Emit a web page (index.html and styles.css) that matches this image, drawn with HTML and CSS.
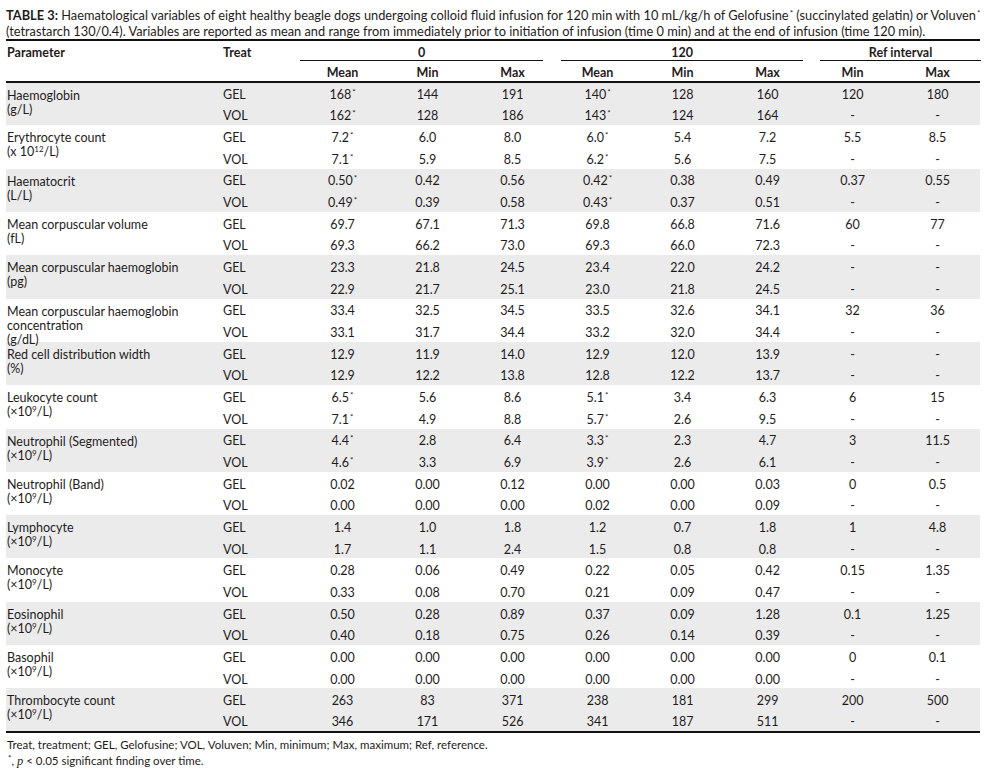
FILE: index.html
```html
<!DOCTYPE html>
<html lang="en">
<head>
<meta charset="utf-8">
<title>Table 3</title>
<link rel="stylesheet" href="styles.css">
</head>
<body>
<div class="page">
  <div class="caption">
    <div class="cap-line"><b>TABLE 3:</b> Haematological variables of eight healthy beagle dogs undergoing colloid fluid infusion for 120 min with 10 mL/kg/h of Gelofusine<sup class="s">*</sup> (succinylated gelatin) or Voluven<sup class="s">*</sup></div>
    <div class="cap-line">(tetrastarch 130/0.4). Variables are reported as mean and range from immediately prior to initiation of infusion (time 0 min) and at the end of infusion (time 120 min).</div>
  </div>
  <table class="data">
    <colgroup>
      <col class="c-param"><col class="c-treat">
      <col class="c-num"><col class="c-num"><col class="c-num">
      <col class="c-num"><col class="c-num"><col class="c-num">
      <col class="c-num"><col class="c-num">
    </colgroup>
    <thead>
      <tr class="h1">
        <th class="left">Parameter</th>
        <th class="left">Treat</th>
        <th colspan="3" class="grp"><div class="grp-in g0">0</div></th>
        <th colspan="3" class="grp"><div class="grp-in g120">120</div></th>
        <th colspan="2" class="grp"><div class="grp-in gref">Ref interval</div></th>
      </tr>
      <tr class="h2">
        <th></th><th></th>
        <th>Mean</th><th>Min</th><th>Max</th>
        <th>Mean</th><th>Min</th><th>Max</th>
        <th>Min</th><th>Max</th>
      </tr>
    </thead>
    <tbody class="shade">
      <tr><td rowspan="2" class="param"><div class="pbox">Haemoglobin<br>(g/L)</div></td><td class="treat">GEL</td><td>168<sup class="s">*</sup></td><td>144</td><td>191</td><td>140<sup class="s">*</sup></td><td>128</td><td>160</td><td>120</td><td>180</td></tr>
      <tr><td class="treat">VOL</td><td>162<sup class="s">*</sup></td><td>128</td><td>186</td><td>143<sup class="s">*</sup></td><td>124</td><td>164</td><td>-</td><td>-</td></tr>
    </tbody>
    <tbody>
      <tr><td rowspan="2" class="param"><div class="pbox">Erythrocyte count<br>(x 10<sup class="e">12</sup>/L)</div></td><td class="treat">GEL</td><td>7.2<sup class="s">*</sup></td><td>6.0</td><td>8.0</td><td>6.0<sup class="s">*</sup></td><td>5.4</td><td>7.2</td><td>5.5</td><td>8.5</td></tr>
      <tr><td class="treat">VOL</td><td>7.1<sup class="s">*</sup></td><td>5.9</td><td>8.5</td><td>6.2<sup class="s">*</sup></td><td>5.6</td><td>7.5</td><td>-</td><td>-</td></tr>
    </tbody>
    <tbody class="shade">
      <tr><td rowspan="2" class="param"><div class="pbox">Haematocrit<br>(L/L)</div></td><td class="treat">GEL</td><td>0.50<sup class="s">*</sup></td><td>0.42</td><td>0.56</td><td>0.42<sup class="s">*</sup></td><td>0.38</td><td>0.49</td><td>0.37</td><td>0.55</td></tr>
      <tr><td class="treat">VOL</td><td>0.49<sup class="s">*</sup></td><td>0.39</td><td>0.58</td><td>0.43<sup class="s">*</sup></td><td>0.37</td><td>0.51</td><td>-</td><td>-</td></tr>
    </tbody>
    <tbody>
      <tr><td rowspan="2" class="param"><div class="pbox">Mean corpuscular volume<br>(fL)</div></td><td class="treat">GEL</td><td>69.7</td><td>67.1</td><td>71.3</td><td>69.8</td><td>66.8</td><td>71.6</td><td>60</td><td>77</td></tr>
      <tr><td class="treat">VOL</td><td>69.3</td><td>66.2</td><td>73.0</td><td>69.3</td><td>66.0</td><td>72.3</td><td>-</td><td>-</td></tr>
    </tbody>
    <tbody class="shade">
      <tr><td rowspan="2" class="param"><div class="pbox">Mean corpuscular haemoglobin<br>(pg)</div></td><td class="treat">GEL</td><td>23.3</td><td>21.8</td><td>24.5</td><td>23.4</td><td>22.0</td><td>24.2</td><td>-</td><td>-</td></tr>
      <tr><td class="treat">VOL</td><td>22.9</td><td>21.7</td><td>25.1</td><td>23.0</td><td>21.8</td><td>24.5</td><td>-</td><td>-</td></tr>
    </tbody>
    <tbody>
      <tr><td rowspan="2" class="param"><div class="pbox">Mean corpuscular haemoglobin<br>concentration<br>(g/dL)</div></td><td class="treat">GEL</td><td>33.4</td><td>32.5</td><td>34.5</td><td>33.5</td><td>32.6</td><td>34.1</td><td>32</td><td>36</td></tr>
      <tr><td class="treat">VOL</td><td>33.1</td><td>31.7</td><td>34.4</td><td>33.2</td><td>32.0</td><td>34.4</td><td>-</td><td>-</td></tr>
    </tbody>
    <tbody class="shade">
      <tr><td rowspan="2" class="param"><div class="pbox">Red cell distribution width<br>(%)</div></td><td class="treat">GEL</td><td>12.9</td><td>11.9</td><td>14.0</td><td>12.9</td><td>12.0</td><td>13.9</td><td>-</td><td>-</td></tr>
      <tr><td class="treat">VOL</td><td>12.9</td><td>12.2</td><td>13.8</td><td>12.8</td><td>12.2</td><td>13.7</td><td>-</td><td>-</td></tr>
    </tbody>
    <tbody>
      <tr><td rowspan="2" class="param"><div class="pbox">Leukocyte count<br>(×10<sup class="e">9</sup>/L)</div></td><td class="treat">GEL</td><td>6.5<sup class="s">*</sup></td><td>5.6</td><td>8.6</td><td>5.1<sup class="s">*</sup></td><td>3.4</td><td>6.3</td><td>6</td><td>15</td></tr>
      <tr><td class="treat">VOL</td><td>7.1<sup class="s">*</sup></td><td>4.9</td><td>8.8</td><td>5.7<sup class="s">*</sup></td><td>2.6</td><td>9.5</td><td>-</td><td>-</td></tr>
    </tbody>
    <tbody class="shade">
      <tr><td rowspan="2" class="param"><div class="pbox">Neutrophil (Segmented)<br>(×10<sup class="e">9</sup>/L)</div></td><td class="treat">GEL</td><td>4.4<sup class="s">*</sup></td><td>2.8</td><td>6.4</td><td>3.3<sup class="s">*</sup></td><td>2.3</td><td>4.7</td><td>3</td><td>11.5</td></tr>
      <tr><td class="treat">VOL</td><td>4.6<sup class="s">*</sup></td><td>3.3</td><td>6.9</td><td>3.9<sup class="s">*</sup></td><td>2.6</td><td>6.1</td><td>-</td><td>-</td></tr>
    </tbody>
    <tbody>
      <tr><td rowspan="2" class="param"><div class="pbox">Neutrophil (Band)<br>(×10<sup class="e">9</sup>/L)</div></td><td class="treat">GEL</td><td>0.02</td><td>0.00</td><td>0.12</td><td>0.00</td><td>0.00</td><td>0.03</td><td>0</td><td>0.5</td></tr>
      <tr><td class="treat">VOL</td><td>0.00</td><td>0.00</td><td>0.00</td><td>0.02</td><td>0.00</td><td>0.09</td><td>-</td><td>-</td></tr>
    </tbody>
    <tbody class="shade">
      <tr><td rowspan="2" class="param"><div class="pbox">Lymphocyte<br>(×10<sup class="e">9</sup>/L)</div></td><td class="treat">GEL</td><td>1.4</td><td>1.0</td><td>1.8</td><td>1.2</td><td>0.7</td><td>1.8</td><td>1</td><td>4.8</td></tr>
      <tr><td class="treat">VOL</td><td>1.7</td><td>1.1</td><td>2.4</td><td>1.5</td><td>0.8</td><td>0.8</td><td>-</td><td>-</td></tr>
    </tbody>
    <tbody>
      <tr><td rowspan="2" class="param"><div class="pbox">Monocyte<br>(×10<sup class="e">9</sup>/L)</div></td><td class="treat">GEL</td><td>0.28</td><td>0.06</td><td>0.49</td><td>0.22</td><td>0.05</td><td>0.42</td><td>0.15</td><td>1.35</td></tr>
      <tr><td class="treat">VOL</td><td>0.33</td><td>0.08</td><td>0.70</td><td>0.21</td><td>0.09</td><td>0.47</td><td>-</td><td>-</td></tr>
    </tbody>
    <tbody class="shade">
      <tr><td rowspan="2" class="param"><div class="pbox">Eosinophil<br>(×10<sup class="e">9</sup>/L)</div></td><td class="treat">GEL</td><td>0.50</td><td>0.28</td><td>0.89</td><td>0.37</td><td>0.09</td><td>1.28</td><td>0.1</td><td>1.25</td></tr>
      <tr><td class="treat">VOL</td><td>0.40</td><td>0.18</td><td>0.75</td><td>0.26</td><td>0.14</td><td>0.39</td><td>-</td><td>-</td></tr>
    </tbody>
    <tbody>
      <tr><td rowspan="2" class="param"><div class="pbox">Basophil<br>(×10<sup class="e">9</sup>/L)</div></td><td class="treat">GEL</td><td>0.00</td><td>0.00</td><td>0.00</td><td>0.00</td><td>0.00</td><td>0.00</td><td>0</td><td>0.1</td></tr>
      <tr><td class="treat">VOL</td><td>0.00</td><td>0.00</td><td>0.00</td><td>0.00</td><td>0.00</td><td>0.00</td><td>-</td><td>-</td></tr>
    </tbody>
    <tbody class="shade last">
      <tr><td rowspan="2" class="param"><div class="pbox">Thrombocyte count<br>(×10<sup class="e">9</sup>/L)</div></td><td class="treat">GEL</td><td>263</td><td>83</td><td>371</td><td>238</td><td>181</td><td>299</td><td>200</td><td>500</td></tr>
      <tr><td class="treat">VOL</td><td>346</td><td>171</td><td>526</td><td>341</td><td>187</td><td>511</td><td>-</td><td>-</td></tr>
    </tbody>
  </table>
  <div class="notes">
    <div class="note">Treat, treatment; GEL, Gelofusine; VOL, Voluven; Min, minimum; Max, maximum; Ref, reference.</div>
    <div class="note"><sup class="s">*</sup>, <i class="p">p</i> &lt; 0.05 significant finding over time.</div>
  </div>
</div>
</body>
</html>
```
FILE: styles.css
```css
* { box-sizing: border-box; }
html, body { margin: 0; padding: 0; background: #ffffff; }
body {
  font-family: Lato, "Open Sans", "Liberation Sans", sans-serif;
  color: #1f1b1c;
}
.page {
  padding: 8px 0 0 6px;
  width: 993px;
}
.caption {
  font-size: 12.8px;
  line-height: 15.5px;
  margin-bottom: 0;
  white-space: nowrap;
}
.caption b { font-weight: 700; }
.s {
  font-size: 8px;
  line-height: 0;
  vertical-align: 4px;
  margin-left: 1px;
}
.e {
  font-size: 8px;
  line-height: 0;
  vertical-align: 4px;
}
table.data {
  border-collapse: collapse;
  width: 974px;
  table-layout: fixed;
  font-size: 12.5px;
  border-top: 2.5px solid #111;
  border-bottom: 2.5px solid #111;
}
.c-param { width: 216px; }
.c-treat { width: 78px; }
.c-num { width: 85px; }
th {
  font-weight: 700;
  text-align: center;
  padding: 0;
  line-height: 14px;
}
th.left { text-align: left; padding-left: 1px; }
tr.h1 th { height: 20px; vertical-align: middle; padding-top: 3px; }
tr.h1 th.grp { vertical-align: bottom; padding-top: 0; }
.grp-in {
  border-bottom: 1.5px solid #111;
  height: 20px;
  padding-top: 4.5px;
}
.g0 { margin: 0 12px 0 0; }
.g120 { margin: 0 7px 0 6px; }
.gref { margin: 0 -1px 0 10px; }
tr.h2 th { height: 21px; vertical-align: middle; padding-top: 3px; }
thead { border-bottom: 2px solid #111; }
td {
  padding: 4px 0 0 0;
  height: 21.66px;
  text-align: center;
  vertical-align: middle;
  line-height: 14px;
  white-space: nowrap;
}
td.treat { text-align: left; padding-left: 1px; }
td.param {
  text-align: left;
  vertical-align: top;
  padding: 6px 0 0 1px;
}
.pbox { height: 33px; overflow: visible; }
tbody.shade td { background: #ebebeb; }
.notes {
  padding-top: 4px;
  font-size: 11.5px;
  line-height: 16.5px;
  padding-left: 1px;
}
.p { font-family: "Liberation Serif", serif; font-style: italic; font-size: 12.5px; }
```
